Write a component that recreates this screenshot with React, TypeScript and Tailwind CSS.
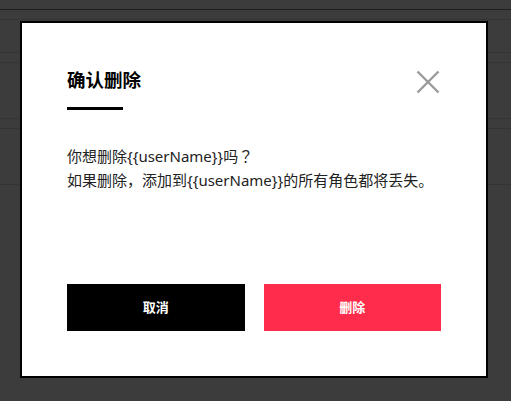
const rows = [10, 33, 10, 56, 10, 56];

const CloseIcon = () => (
  <svg width="24" height="24" viewBox="0 0 24 24" fill="none" stroke="currentColor" strokeWidth="2.4">
    <path d="M1.5 1.5L22.5 22.5M22.5 1.5L1.5 22.5" />
  </svg>
);

const ConfirmDeleteModal = () => {
  return (
    <div className="w-[468px] h-[357px] bg-white border-2 border-black flex flex-col px-[45px] pt-[41px] pb-[45px]">
      {/* Header */}
      <div className="flex justify-between items-start">
        <div>
          <h2 className="text-[18.5px] leading-[32px] font-bold text-black">确认删除</h2>
          <div className="w-[56px] h-[3px] bg-black mt-[11px]" />
        </div>
        <button className="mt-[6px] mr-[1px] text-[#9a9a9a]">
          <CloseIcon />
        </button>
      </div>

      {/* Message */}
      <div className="mt-[34px] text-[15px] leading-[24px] text-[#222]">
        <p>
          你想删除{'{{userName}}'}吗
          <span className="font-['Noto_Sans_CJK_JP',sans-serif]">？</span>
        </p>
        <p>如果删除，添加到{'{{userName}}'}的所有角色都将丢失。</p>
      </div>

      {/* Actions */}
      <div className="mt-auto flex gap-[19px]">
        <button className="w-[178px] h-[47px] bg-black text-white text-[13px] font-bold">取消</button>
        <button className="w-[178px] h-[47px] bg-[#ff2d4b] text-white text-[13px] font-bold">删除</button>
      </div>
    </div>
  );
};

export default function App() {
  return (
    <div
      className="relative w-[511px] h-[401px] bg-[#3c3c3c] overflow-hidden"
      style={{ fontFamily: '"Noto Sans", "Noto Sans CJK SC", sans-serif' }}
    >
      {/* Dimmed page behind */}
      <div className="h-[10px] border-b border-[#1e1e1e]" />
      {rows.map((h, i) => (
        <div key={i} className="border-b border-[#343434]" style={{ height: h }} />
      ))}

      {/* Overlay */}
      <div className="absolute inset-0 pl-[20px] pt-[21px]">
        <ConfirmDeleteModal />
      </div>
    </div>
  );
}
